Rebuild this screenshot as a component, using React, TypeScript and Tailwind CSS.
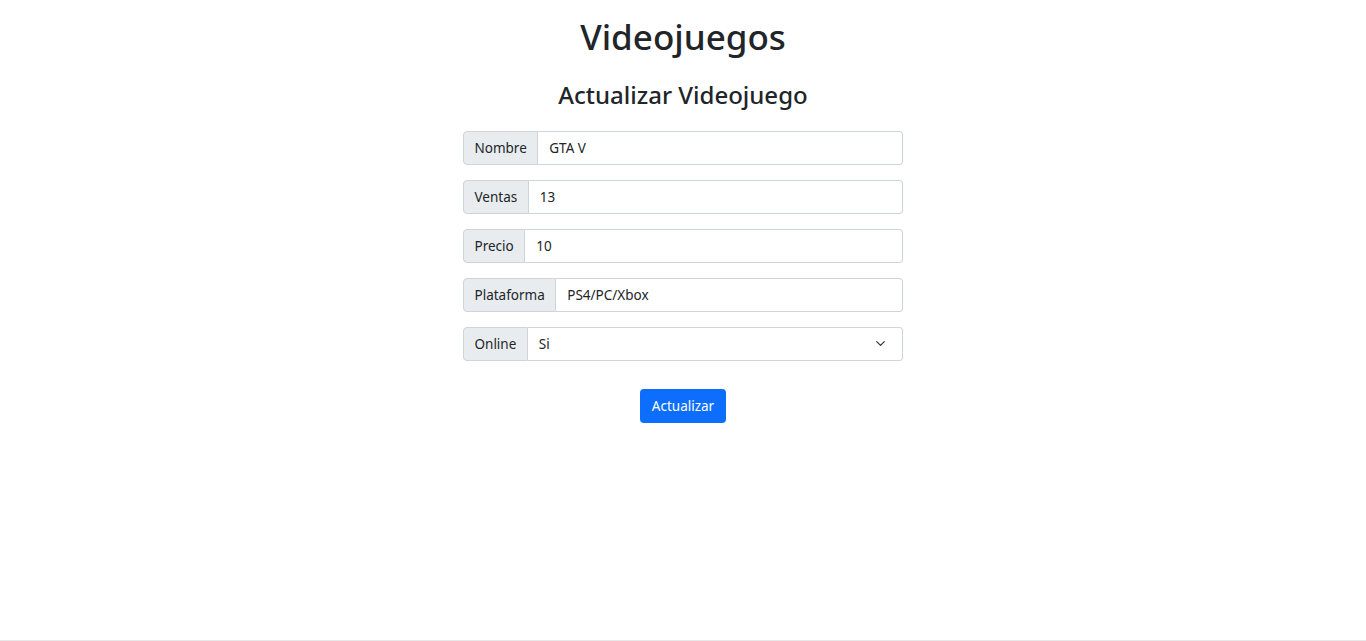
import { ChevronDown } from 'lucide-react';

const font = { fontFamily: '"Segoe UI", "Noto Sans", "Open Sans", sans-serif' };

function Field({ label, value }: { label: string; value: string }) {
  return (
    <div className="flex h-[34px] w-full text-[13.5px] text-[#212529]">
      <span className="flex items-center px-[10.5px] bg-[#e9ecef] border border-[#ced4da] rounded-l-[4px]">
        {label}
      </span>
      <input
        defaultValue={value}
        className="flex-1 min-w-0 px-[11px] border border-l-0 border-[#ced4da] rounded-r-[4px] bg-white outline-none"
      />
    </div>
  );
}

export default function App() {
  return (
    <div className="h-[641px] flex flex-col bg-white text-[#212529]" style={font}>
      <div className="flex-1 flex flex-col items-center">
        <h1 className="mt-[16px] text-[35px] font-medium leading-[1.2]">Videojuegos</h1>
        <h2 className="mt-[23px] text-[24px] font-medium leading-[1.2]">Actualizar Videojuego</h2>
        <div className="mt-[21px] w-[440px] flex flex-col gap-[15px]">
          <Field label="Nombre" value="GTA V" />
          <Field label="Ventas" value="13" />
          <Field label="Precio" value="10" />
          <Field label="Plataforma" value="PS4/PC/Xbox" />
          <div className="flex h-[34px] w-full text-[13.5px]">
            <span className="flex items-center px-[10.5px] bg-[#e9ecef] border border-[#ced4da] rounded-l-[4px]">
              Online
            </span>
            <div className="flex-1 flex items-center justify-between pl-[11px] pr-[14px] border border-l-0 border-[#ced4da] rounded-r-[4px] bg-white">
              <span>Si</span>
              <ChevronDown size={15} strokeWidth={2} className="text-[#343a40]" />
            </div>
          </div>
        </div>
        <button className="mt-[28px] h-[34px] px-[12px] rounded-[4px] bg-[#0d6efd] text-white text-[13.5px]">
          Actualizar
        </button>
      </div>
      <div className="h-px bg-[#e8e8e8]" />
    </div>
  );
}
